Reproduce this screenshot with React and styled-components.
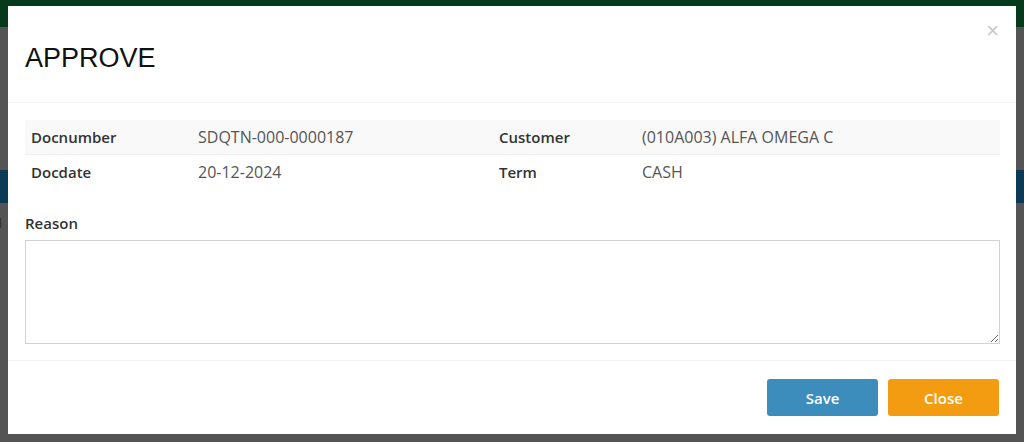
import React from "react";
import styled, { createGlobalStyle } from "styled-components";

const Global = createGlobalStyle`
  html, body { margin: 0; padding: 0; }
  body {
    width: 1024px;
    height: 442px;
    overflow: hidden;
    background: #545454;
    font-family: "Open Sans", "Liberation Sans", sans-serif;
  }
`;

const Page = styled.div`
  position: relative;
  width: 1024px;
  height: 442px;
  display: flex;
  flex-direction: column;
  background: #545454;
`;

const TopBar = styled.div`
  height: 27px;
  background: #063a1d;
`;

const Gap = styled.div`
  height: ${({ h }) => h}px;
`;

const Band = styled.div`
  height: 33px;
  background: #0c3956;
`;

const PeekText = styled.div`
  padding: 10px 0 0 0;
  margin-left: -4px;
  color: #2e2e2e;
  font-size: 14px;
`;

const Modal = styled.div`
  position: absolute;
  left: 8px;
  top: 6px;
  width: 1008px;
  height: 428px;
  background: #fff;
  display: flex;
  flex-direction: column;
`;

const Header = styled.div`
  height: 96px;
  border-bottom: 1px solid #f2f2f2;
  display: flex;
  align-items: center;
  justify-content: space-between;
  padding: 0 17px;
  position: relative;
`;

const Title = styled.h4`
  margin: 0;
  margin-top: 8px;
  font-family: "Liberation Sans", Arial, sans-serif;
  font-weight: 400;
  font-size: 27px;
  color: #111;
`;

const CloseX = styled.span`
  position: absolute;
  top: 14px;
  right: 17px;
  font-family: "Liberation Sans", Arial, sans-serif;
  font-size: 22px;
  line-height: 22px;
  color: #c8c8c8;
`;

const Body = styled.div`
  padding: 17px 16px 0 17px;
  height: 240px;
  border-bottom: 1px solid #f2f2f2;
`;

const Table = styled.div`
  display: grid;
  grid-template-columns: 167px 301px 143px 1fr;
`;

const Cell = styled.div`
  height: 34px;
  display: flex;
  align-items: center;
  padding-left: 6px;
  font-size: ${({ label }) => (label ? "15px" : "16px")};
  color: ${({ label }) => (label ? "#333" : "#555")};
  font-weight: ${({ label }) => (label ? 600 : 400)};
  background: ${({ shade }) => (shade ? "#f9f9f9" : "#fff")};
  border-top: ${({ shade }) => (shade ? "none" : "1px solid #f0f0f0")};
  box-sizing: border-box;
`;

const Label = styled.div`
  margin-top: 25px;
  font-size: 15px;
  font-weight: 600;
  color: #333;
`;

const TextArea = styled.textarea`
  display: block;
  margin-top: 7px;
  width: 975px;
  height: 104px;
  box-sizing: border-box;
  border: 1px solid #d2d2d2;
  border-radius: 0;
  outline: none;
  padding: 6px 12px;
  font-family: inherit;
  font-size: 15px;
`;

const Footer = styled.div`
  flex: 1;
  display: flex;
  justify-content: flex-end;
  align-items: center;
  gap: 10px;
  padding: 0 17px 0 17px;
`;

const Button = styled.button`
  width: 111px;
  height: 37px;
  border: none;
  border-radius: 3px;
  background: ${({ bg }) => bg};
  color: #fff;
  font-family: "Open Sans", sans-serif;
  font-size: 15px;
  font-weight: 600;
  cursor: pointer;
`;

const rows = [
  ["Docnumber", "SDQTN-000-0000187", "Customer", "(010A003) ALFA OMEGA C"],
  ["Docdate", "20-12-2024", "Term", "CASH"],
];

export default function App() {
  return (
    <>
      <Global />
      <Page>
        <TopBar />
        <Gap h={143} />
        <Band />
        <PeekText>1</PeekText>
        <Modal>
          <Header>
            <Title>APPROVE</Title>
            <CloseX>×</CloseX>
          </Header>
          <Body>
            <Table>
              {rows.map((r, i) =>
                r.map((t, j) => (
                  <Cell key={i + "-" + j} label={j % 2 === 0} shade={i === 0}>
                    {t}
                  </Cell>
                ))
              )}
            </Table>
            <Label>Reason</Label>
            <TextArea />
          </Body>
          <Footer>
            <Button bg="#3c8dbc">Save</Button>
            <Button bg="#f39c12">Close</Button>
          </Footer>
        </Modal>
      </Page>
    </>
  );
}
